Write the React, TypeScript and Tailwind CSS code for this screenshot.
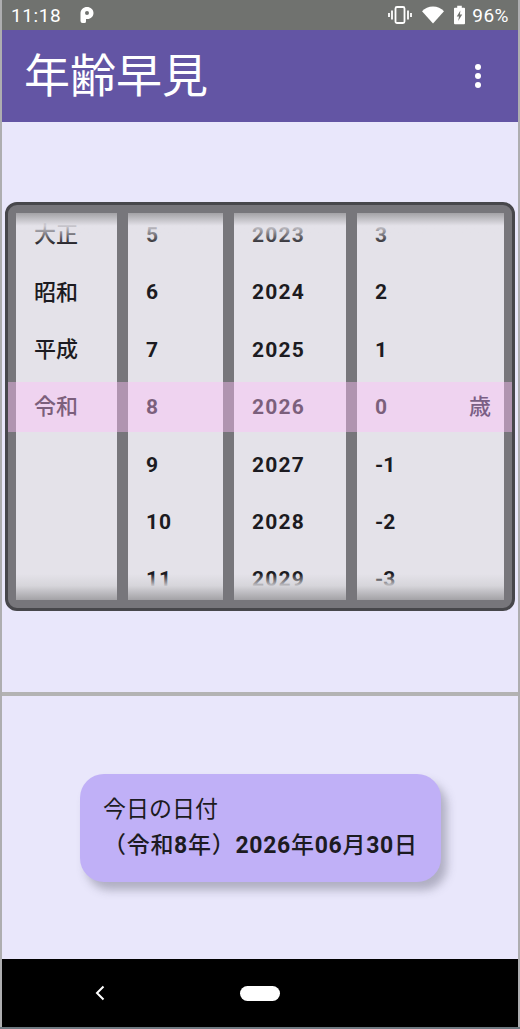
import React from "react";

const font = "font-['Roboto','Noto_Sans_CJK_JP',sans-serif]";

// one wheel of the picker, rows are 57.4px high
const Wheel = ({
  items,
  className,
  textClass,
}: {
  items: string[];
  className: string;
  textClass: string;
}) => (
  <div className={`relative h-full overflow-hidden bg-[#e4e2e9] ${className}`}>
    <div className="mt-[-6px] flex flex-col">
      {items.map((item, i) => (
        <div key={i} className={`flex h-[57.4px] shrink-0 items-center text-[#1c1b21] ${textClass}`}>
          {item}
        </div>
      ))}
    </div>
    <div className="absolute inset-x-0 top-0 h-[32px] bg-gradient-to-b from-[#a3a2a6] via-[#e4e2e9e0] via-40% to-transparent" />
    <div className="absolute inset-x-0 bottom-0 h-[26px] bg-gradient-to-t from-[#a3a2a6] via-[#d5d4d9e8] via-55% to-transparent" />
  </div>
);

const App = () => {
  return (
    <div className={`flex h-[1029px] w-[520px] flex-col overflow-hidden bg-[#aeaeb0] px-[2px] ${font}`}>
      {/* status bar */}
      <div className="flex h-[30px] shrink-0 items-center bg-[#70726f] pl-[9px] pr-[9px] text-white">
        <span className="text-[19px] leading-none tracking-[0.6px]">11:18</span>
        <svg className="ml-[18px] h-[18px] w-[16px]" viewBox="0 0 15 18">
          <path
            fill="#fff"
            fillRule="evenodd"
            d="M1 7.500C1 3.500 4 1 7.500 1S14 3.500 14 7s-2.800 6-6 6H6.500v2.500a1.500 1.500 0 0 1-1.500 1.500H3a2 2 0 0 1-2-2zM7.500 5a2 2 0 1 0 0 4 2 2 0 0 0 0-4z"
          />
        </svg>
        <div className="flex-1" />
        <svg className="h-[20px] w-[24px]" viewBox="0 0 24 20" fill="none" stroke="#fff">
          <rect x="7.500" y="2" width="9" height="16" rx="1.500" strokeWidth="1.800" />
          <path d="M4 5.500v9M1 8v4M20 5.500v9M23 8v4" strokeWidth="1.800" />
        </svg>
        <svg className="ml-[10px] h-[18px] w-[22px]" viewBox="0 0 22 18">
          <path fill="#fff" d="M11 17.500 0 5.200C2.800 2.200 6.700.5 11 .5s8.200 1.700 11 4.700z" />
        </svg>
        <svg className="ml-[10px] h-[20px] w-[11px]" viewBox="0 0 12 20">
          <path
            fill="#fff"
            fillRule="evenodd"
            d="M3.500 0h5v2H11a1 1 0 0 1 1 1v16a1 1 0 0 1-1 1H1a1 1 0 0 1-1-1V3a1 1 0 0 1 1-1h2.500zM7 5 3 11.500h2.500L4.500 16.500 9 9.500H6.500z"
          />
        </svg>
        <span className="ml-[7px] text-[19px] leading-none tracking-[0.5px]">96%</span>
      </div>

      {/* app bar */}
      <div className="flex h-[92px] shrink-0 items-center justify-between bg-[#6355a4] pl-[22px] pr-[37px]">
        <span className="text-[46px] leading-none text-white">年齢早見</span>
        <div className="flex flex-col gap-[3px]">
          <div className="h-[6px] w-[6px] rounded-full bg-white" />
          <div className="h-[6px] w-[6px] rounded-full bg-white" />
          <div className="h-[6px] w-[6px] rounded-full bg-white" />
        </div>
      </div>

      {/* content */}
      <div className="flex flex-1 flex-col bg-[#e9e7fb]">
        <div className="h-[570px] shrink-0 px-[3px] pt-[80px]">
          <div className="relative flex h-[409px] gap-[11px] rounded-[12px] border-[3px] border-[#47474b] bg-[#77767b] p-[8px]">
            <Wheel
              items={["大正", "昭和", "平成", "令和"]}
              className="w-[101px]"
              textClass="-translate-y-[1px] pl-[18px] text-[22px] font-medium"
            />
            <Wheel
              items={["5", "6", "7", "8", "9", "10", "11"]}
              className="w-[95px]"
              textClass="pl-[18px] text-[21px] font-bold tracking-[0.9px]"
            />
            <Wheel
              items={["2023", "2024", "2025", "2026", "2027", "2028", "2029"]}
              className="w-[112px]"
              textClass="pl-[18px] text-[21px] font-bold tracking-[1.200px]"
            />
            <Wheel
              items={["3", "2", "1", "0", "-1", "-2", "-3"]}
              className="w-[147px]"
              textClass="pl-[18px] text-[21px] font-bold"
            />
            {/* selected row */}
            <div className="absolute inset-x-0 top-[177px] flex h-[50px] items-center justify-end bg-[#ffbefa]/[0.42] pr-[21px]">
              <span className="-translate-y-[1px] text-[22px] font-medium text-[#7a5f85]">歳</span>
            </div>
          </div>
        </div>

        <div className="h-[4px] shrink-0 bg-[#b3b3b3]" />

        <div className="flex flex-1 items-start justify-center pl-[1px] pt-[78px]">
          <div className="flex h-[108px] w-[361px] flex-col justify-center gap-[8px] rounded-[24px] bg-[#c0b0f7] pl-[23px] pt-[2px] text-[#1c1b21] shadow-[6px_8px_10px_rgba(70,70,90,0.35)]">
            <span className="mt-[-2px] text-[23px] leading-[28px]">今日の日付</span>
            <span className="text-[23px] font-medium leading-[28px] tracking-[0.7px]">
              （令和<span className="font-bold">8</span>年）<span className="font-bold">2026</span>年
              <span className="font-bold">06</span>月<span className="font-bold">30</span>日
            </span>
          </div>
        </div>
      </div>

      {/* nav bar */}
      <div className="relative flex h-[68px] shrink-0 items-center justify-center bg-black">
        <svg className="absolute left-[92px] top-[26px] h-[16px] w-[12px]" viewBox="0 0 12 16" fill="none" stroke="#fff" strokeWidth="2">
          <path d="M9.500 1.500 3 8l6.500 6.500" />
        </svg>
        <div className="h-[15px] w-[40px] rounded-full bg-white" />
      </div>
      <div className="mx-[-2px] h-[2px] shrink-0 bg-[#6f7a82]" />
    </div>
  );
};

export default App;
